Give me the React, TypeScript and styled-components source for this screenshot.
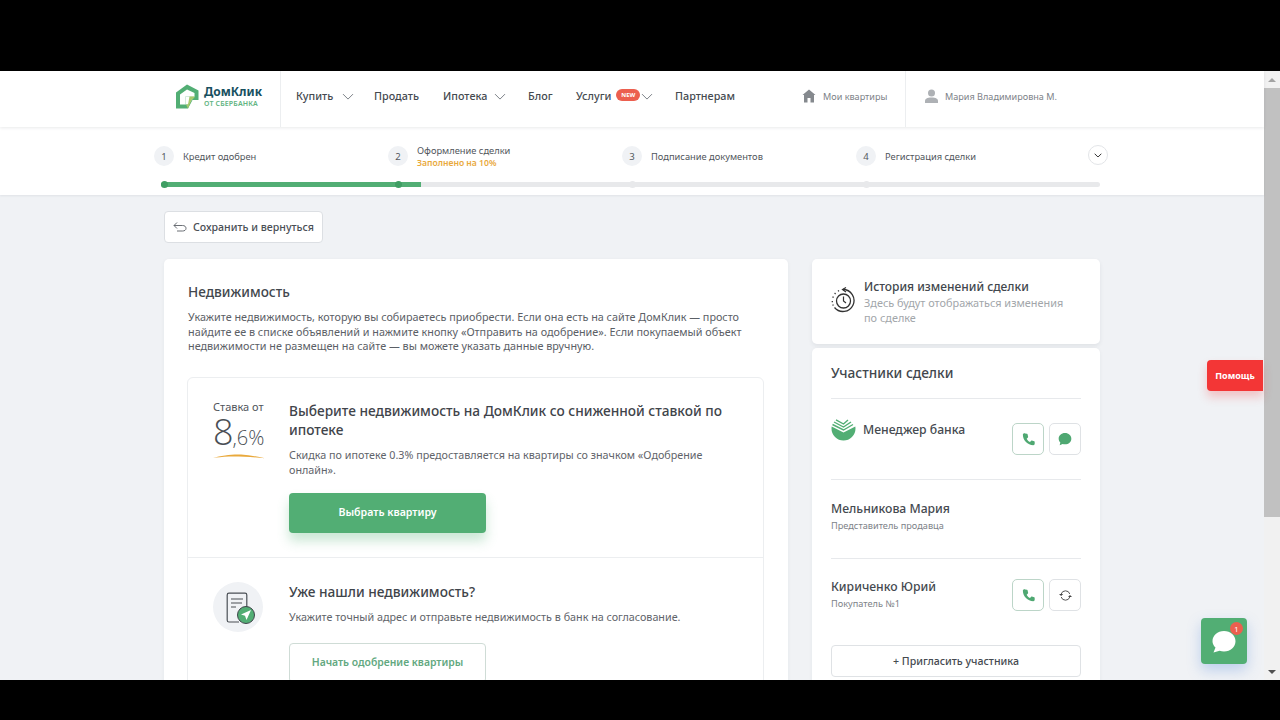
import React from "react";
import styled, { createGlobalStyle } from "styled-components";

const Global = createGlobalStyle`
  html, body { margin: 0; padding: 0; background: #000; height: 100%; overflow: hidden; }
  * { box-sizing: border-box; }
  body { font-family: "Noto Sans", "Open Sans", sans-serif; color: #3f444a; }
`;

const Screen = styled.div`
  width: 1280px; height: 720px; display: flex; flex-direction: column; background: #000;
`;
const BlackBar = styled.div<{ $h: number }>`
  height: ${p => p.$h}px; flex: none; background: #000;
`;
const Viewport = styled.div`
  position: relative; height: 609px; flex: none; display: flex; overflow: hidden;
`;
const Page = styled.div`
  width: 1264px; flex: none; background: #f0f2f5; display: flex; flex-direction: column;
`;
const Scrollbar = styled.div`
  width: 16px; flex: none; background: #f1f1f1; display: flex; flex-direction: column; align-items: center;
`;
const ScrollArrow = styled.div<{ $down?: boolean }>`
  height: 17px; flex: none; display: flex; align-items: center; justify-content: center;
  &::before {
    content: ""; width: 0; height: 0; border-left: 4px solid transparent; border-right: 4px solid transparent;
    ${p => p.$down ? "border-top: 4px solid #505050;" : "border-bottom: 4px solid #a3a3a3;"}
  }
`;
const ScrollThumb = styled.div`
  width: 16px; height: 429px; background: #c1c1c1;
`;
const ScrollTrack = styled.div`flex: 1;`;

const Header = styled.header`
  height: 56px; flex: none; background: #fff; display: flex; padding-left: 164px;
  box-shadow: 0 1px 3px rgba(40, 50, 60, .1); position: relative; z-index: 2;
`;
const LogoCell = styled.div`
  width: 117px; flex: none; padding: 0 0 6px 12px; display: flex; align-items: center; gap: 5px;
  border-right: 1px solid #eceef0;
`;
const LogoText = styled.div`
  display: flex; flex-direction: column; padding-top: 1px;
`;
const LogoName = styled.span`
  font-size: 12px; font-weight: 700; line-height: 14px; color: #17505f;
`;
const LogoSub = styled.span`
  font-size: 7px; font-weight: 600; line-height: 9px; color: #62b482; letter-spacing: .15px;
`;
const Nav = styled.nav`
  display: flex; align-items: center; padding: 0 0 8px 15px; width: 508px; flex: none;
`;
const NavItem = styled.span<{ $w: number }>`
  font-size: 10.8px; font-weight: 500; color: #454a50; width: ${p => p.$w}px; flex: none;
  display: flex; align-items: center; white-space: nowrap; gap: 3px;
`;
const ChevronGap = styled.span<{ $m: number }>`
  display: flex; margin: 3px 0 0 ${p => p.$m}px;
`;
const NewBadge = styled.span`
  font-size: 6px; font-weight: 700; color: #fff; background: #ec5f4f; border-radius: 6px;
  width: 24px; height: 12px; display: inline-flex; align-items: center; justify-content: center;
  margin: -1px -2px 0 2px;
`;
const Right = styled.div<{ $w: number; $line?: boolean }>`
  width: ${p => p.$w}px; flex: none; display: flex; align-items: center; gap: ${p => p.$line ? 7 : 7}px;
  padding-bottom: 6px;
  font-size: 9.1px; color: #7d8288; white-space: nowrap;
  ${p => p.$line ? "border-left: 1px solid #eceef0; padding-left: 19px;" : "padding-left: 13px;"}
`;

const Steps = styled.section`
  height: 68px; flex: none; background: #fff; padding: 0 164px 0 161px; position: relative;
  box-shadow: 0 1px 2px rgba(40, 50, 60, .08); z-index: 1;
  display: flex; flex-direction: column;
`;
const StepRow = styled.div`
  height: 55px; flex: none; display: flex; position: relative;
`;
const Step = styled.div`
  width: 234px; flex: none; display: flex; align-items: center; gap: 9px; padding-top: 3px;
  transform: translateX(-7px);
`;
const StepNum = styled.span`
  width: 20px; height: 20px; flex: none; border-radius: 50%; background: #f0f2f5;
  font-size: 9.6px; color: #55595f; display: flex; align-items: center; justify-content: center;
`;
const StepText = styled.div`
  display: flex; flex-direction: column; font-size: 9.3px; line-height: 12px; color: #50555b; white-space: nowrap;
  padding-top: 2px;
`;
const StepNote = styled.span`
  color: #e9a93c; font-weight: 600; font-size: 8.6px; line-height: 13px;
`;
const Collapse = styled.span`
  position: absolute; right: -8px; top: 18px; width: 20px; height: 20px; border-radius: 50%;
  border: 1px solid #e3e5e8; background: #fff; display: flex; align-items: center; justify-content: center;
`;
const Track = styled.div`
  height: 5px; flex: none; background: #e8e9eb; border-radius: 3px; position: relative; width: 939px;
`;
const TrackFill = styled.div<{ $w: number }>`
  position: absolute; left: 0; top: 0; height: 5px; width: ${p => p.$w}px; background: #52ae74; border-radius: 3px 0 0 3px;
`;
const TrackDot = styled.span<{ $x: number; $on?: boolean }>`
  position: absolute; left: ${p => p.$x}px; top: -1px; width: 7px; height: 7px; border-radius: 50%;
  background: ${p => p.$on ? "#3f9e63" : "#e8e9eb"};
`;

const Body = styled.main`
  padding: 16px 0 0 164px; flex: 1; min-height: 0; overflow: hidden;
`;
const BackButton = styled.button`
  height: 32px; width: 159px; background: #fff; border: 1px solid #dcdfe3; border-radius: 4px;
  display: flex; align-items: center; gap: 6px; padding: 0 0 1px 8px; font: 500 10.6px "Noto Sans", sans-serif; color: #4a4f55;
`;
const Columns = styled.div`
  display: flex; gap: 24px; margin-top: 16px; align-items: flex-start;
`;
const MainCard = styled.section`
  width: 624px; flex: none; background: #fff; border-radius: 5px; padding: 24px 24px 0 24px; height: 500px;
  box-shadow: 0 1px 4px rgba(40, 50, 60, .05);
`;
const Title = styled.h2`
  margin: 0; font-size: 13.6px; line-height: 18px; font-weight: 500; color: #42474d;
`;
const Lead = styled.p`
  margin: 9px 0 0; font-size: 10.8px; line-height: 14.5px; color: #5b6066; white-space: nowrap;
`;
const Options = styled.div`
  margin: 23px 0 0 -1px; border: 1px solid #eceef0; border-radius: 6px; width: 577px;
`;
const Option = styled.div<{ $line?: boolean }>`
  display: flex; ${p => p.$line ? "border-top: 1px solid #eceef0;" : ""}
  padding: ${p => p.$line ? "24px" : "23px"} 0 24px 0;
`;
const Lhs = styled.div`
  width: 101px; flex: none; display: flex; flex-direction: column; align-items: flex-start; padding-left: 25px;
`;
const Rate = styled.div`
  font-size: 11px; line-height: 14px; color: #50555b; white-space: nowrap; margin-top: -1px;
`;
const RateValue = styled.div`
  font-size: 36px; line-height: 36px; font-weight: 300; color: #4a4f55; white-space: nowrap; font-family: "Open Sans", sans-serif;
  letter-spacing: -1px;
`;
const RateFrac = styled.span`
  font-size: 20px; letter-spacing: 0;
`;
const RateLine = styled.svg`
  display: block; margin-top: -3px;
`;
const Rhs = styled.div`
  width: 460px; flex: none;
`;
const OptionTitle = styled.h3`
  margin: 0; font-size: 13.7px; line-height: 19px; font-weight: 500; color: #3f444a;
`;
const OptionText = styled.p`
  margin: 9px 0 0; font-size: 10.75px; line-height: 15px; color: #5f646a;
`;
const Primary = styled.button`
  display: block; margin-top: 15px; width: 197px; height: 40px; border: 0; border-radius: 4px; background: #52ae74;
  color: #fff; font: 600 10.6px "Noto Sans", sans-serif; padding: 0 0 2px;
  box-shadow: 0 8px 12px rgba(82, 174, 116, .3);
`;
const Outline = styled.button`
  display: block; margin-top: 18px; width: 197px; height: 40px; border: 1px solid #cfdcd6; border-radius: 4px; background: #fff;
  color: #62a880; font: 600 10.4px "Noto Sans", sans-serif; padding: 0 0 2px;
`;
const IconCircle = styled.div`
  width: 50px; height: 50px; border-radius: 50%; background: #f0f2f5; display: flex;
`;
const Side = styled.aside`
  width: 288px; flex: none; display: flex; flex-direction: column; gap: 4px;
`;
const HistoryCard = styled.section`
  height: 85px; background: #fff; border-radius: 5px; display: flex; gap: 8px; padding: 20px 16px 0 19px;
  box-shadow: 0 2px 4px rgba(40, 50, 60, .08);
`;
const HistoryIcon = styled.div`
  padding-top: 8px; flex: none; height: 24px;
`;
const HistoryTitle = styled.div`
  font-size: 12px; line-height: 16px; font-weight: 500; color: #42474d;
`;
const HistoryText = styled.div`
  font-size: 10.9px; line-height: 15px; color: #a2a6aa; margin-top: 0; width: 215px;
`;
const MembersCard = styled.section`
  background: #fff; border-radius: 5px; padding: 16px 19px 0; height: 400px;
  box-shadow: 0 1px 4px rgba(40, 50, 60, .05);
`;
const MembersTitle = styled.h2`
  margin: 0; font-size: 13.7px; line-height: 18px; font-weight: 500; color: #42474d; padding-bottom: 16px;
`;
const Member = styled.div<{ $h: number }>`
  height: ${p => p.$h}px; border-top: 1px solid #e7e9ec; display: flex; justify-content: space-between; align-items: flex-start;
`;
const MemberInfo = styled.div<{ $top: number }>`
  padding-top: ${p => p.$top}px;
`;
const BankRow = styled.div`
  display: flex; align-items: center; gap: 7px; padding-top: 18px;
`;
const MemberName = styled.div`
  font-size: 12.2px; line-height: 17px; font-weight: 500; color: #454a50;
`;
const MemberRole = styled.div`
  font-size: 9.2px; line-height: 13px; color: #7d8288; margin-top: 2px;
`;
const Actions = styled.div<{ $top: number }>`
  display: flex; gap: 5px; padding-top: ${p => p.$top}px;
`;
const IconBtn = styled.button<{ $active?: boolean }>`
  width: 32px; height: 32px; padding: 0; background: #fff; border-radius: 5px; display: flex; align-items: center; justify-content: center;
  border: 1px solid ${p => p.$active ? "#bcd5c8" : "#dfe2e5"};
`;
const Invite = styled.button`
  display: block; margin-top: 1px; width: 250px; height: 32px; background: #fff; border: 1px solid #dfe2e5; border-radius: 4px;
  font: 500 10.6px "Noto Sans", sans-serif; color: #454a50; padding: 0 0 1px;
`;
const Help = styled.div`
  position: absolute; left: 1207px; top: 289px; width: 56px; height: 31px; background: #f33636; border-radius: 4px 0 0 4px;
  color: #fff; font-size: 9px; font-weight: 700; display: flex; align-items: center; justify-content: center;
  box-shadow: 0 6px 10px rgba(243, 54, 54, .25);
`;
const Chat = styled.div`
  position: absolute; left: 1201px; top: 547px; width: 46px; height: 46px; background: #52ae74; border-radius: 4px;
  display: flex; align-items: center; justify-content: center;
  box-shadow: 0 6px 14px rgba(90, 140, 220, .35);
`;
const ChatBadge = styled.span`
  position: absolute; right: 4px; top: 4px; width: 13px; height: 13px; border-radius: 50%; background: #ec5f4f;
  color: #fff; font-size: 7.5px; display: flex; align-items: center; justify-content: center;
`;

const Chevron = ({ size = 12, color = "#7d8288", weight = 1 }: { size?: number; color?: string; weight?: number }) => (
  <svg width={size} height={size * 0.6} viewBox="0 0 12 7" fill="none"><path d="M1 1l5 5 5-5" stroke={color} strokeWidth={weight} /></svg>
);
const Phone = () => (
  <svg width="15" height="15" viewBox="0 0 24 24"><path fill="#4fa872" d="M6.6 2.2l3 .5c.5.1.8.4.9.9l.9 4c.1.4 0 .8-.3 1.1l-2 1.9c1.1 2.3 3 4.2 5.3 5.3l1.9-2c.3-.3.7-.4 1.1-.3l3.7 1c.5.1.8.5.8 1v3.200c0 1.3-1 2.200-2.200 2.200C10.600 21 3 13.300 3 4.300 3 3.100 4.400 1.900 6.600 2.200z" /></svg>
);
const Bubble = () => (
  <svg width="16" height="16" viewBox="0 0 24 24"><path fill="#4fa872" d="M12 3c5.500 0 9.500 3.700 9.500 8.500S17.500 20 12 20c-1.300 0-2.500-.2-3.600-.6L4 21.500l1-4.300C3.400 15.700 2.500 13.700 2.500 11.500 2.500 6.700 6.500 3 12 3z" /></svg>
);

export default function App() {
  return (
    <Screen>
      <Global />
      <BlackBar $h={71} />
      <Viewport>
        <Page>
          <Header>
            <LogoCell>
              <svg width="23" height="25" viewBox="0 0 23 25" fill="none">
                <path d="M0 8.500L11 0.500 22.500 6.500V16H16.500L12 24.500H0V8.500Z" fill="#52ae74" />
                <path d="M4 10.500L11 5.500 18.500 9V12.500H9.500V20.500H4V10.500Z" fill="#fff" />
                <path d="M9.500 12.500H18.500L12 20.500H9.500V12.500Z" fill="#fff" />
                <path d="M13.500 12.500H18.500V13.500L15.500 16 12 24.500 10 20.500H12L13.500 12.500Z" fill="#a7c96b" />
              </svg>
              <LogoText>
                <LogoName>ДомКлик</LogoName>
                <LogoSub>ОТ СБЕРБАНКА</LogoSub>
              </LogoText>
            </LogoCell>
            <Nav>
              <NavItem $w={78}>Купить <ChevronGap $m={6}><Chevron /></ChevronGap></NavItem>
              <NavItem $w={69}>Продать</NavItem>
              <NavItem $w={85}>Ипотека <ChevronGap $m={4}><Chevron /></ChevronGap></NavItem>
              <NavItem $w={48}>Блог</NavItem>
              <NavItem $w={99}>Услуги<NewBadge>NEW</NewBadge><ChevronGap $m={0}><Chevron /></ChevronGap></NavItem>
              <NavItem $w={110}>Партнерам</NavItem>
            </Nav>
            <Right $w={116}>
              <svg width="14" height="14" viewBox="0 0 14 14"><path fill="#85898e" d="M7 0.500L13.500 6H12V13.500H2V6H.5L7 .5zM5.500 9v4.500h3V9h-3z" /></svg>
              Мои квартиры
            </Right>
            <Right $w={170} $line>
              <svg width="13" height="14" viewBox="0 0 13 14"><circle cx="6.500" cy="4" r="3.500" fill="#aeb1b5" /><path fill="#aeb1b5" d="M0 14v-2c0-2 2-3.500 6.500-3.500S13 10 13 12v2H0z" /></svg>
              Мария Владимировна М.
            </Right>
          </Header>
          <Steps>
            <StepRow>
              <Step><StepNum>1</StepNum><StepText>Кредит одобрен</StepText></Step>
              <Step><StepNum>2</StepNum><StepText>Оформление сделки<StepNote>Заполнено на 10%</StepNote></StepText></Step>
              <Step><StepNum>3</StepNum><StepText>Подписание документов</StepText></Step>
              <Step><StepNum>4</StepNum><StepText>Регистрация сделки</StepText></Step>
              <Collapse><Chevron size={8} color="#333" weight={1.5} /></Collapse>
            </StepRow>
            <Track>
              <TrackFill $w={260} />
              <TrackDot $x={0} $on />
              <TrackDot $x={234} $on />
              <TrackDot $x={468} />
              <TrackDot $x={702} />
            </Track>
          </Steps>
          <Body>
            <BackButton>
              <svg width="14" height="10" viewBox="0 0 14 10" fill="none"><path d="M4 .5L1 3.500l3 3M1 3.500h8.500c2 0 3.500 1 3.500 2.800S11.500 9 9.500 9H4" stroke="#5a5f65" strokeWidth=".9" /></svg>
              Сохранить и вернуться
            </BackButton>
            <Columns>
              <MainCard>
                <Title>Недвижимость</Title>
                <Lead>
                  Укажите недвижимость, которую вы собираетесь приобрести. Если она есть на сайте ДомКлик — просто<br />
                  найдите ее в списке объявлений и нажмите кнопку «Отправить на одобрение». Если покупаемый объект<br />
                  недвижимости не размещен на сайте — вы можете указать данные вручную.
                </Lead>
                <Options>
                  <Option>
                    <Lhs>
                      <Rate>Ставка от</Rate>
                      <RateValue>8<RateFrac>,6%</RateFrac></RateValue>
                      <RateLine width="52" height="6" viewBox="0 0 52 6" fill="none"><path d="M0 5C8 2.500 20 1 28 1.500 36 2 44 3.500 52 5.200 40 4 26 3.200 16 3.500 9 3.800 4 4.500 0 5Z" fill="#e9a93c" /></RateLine>
                    </Lhs>
                    <Rhs>
                      <OptionTitle>Выберите недвижимость на ДомКлик со сниженной ставкой по ипотеке</OptionTitle>
                      <OptionText>Скидка по ипотеке 0.3% предоставляется на квартиры со значком «Одобрение онлайн».</OptionText>
                      <Primary>Выбрать квартиру</Primary>
                    </Rhs>
                  </Option>
                  <Option $line>
                    <Lhs>
                      <IconCircle>
                        <svg width="50" height="50" viewBox="0 0 50 50" fill="none">
                          <path d="M26 40H16a1.800 1.800 0 0 1-1.800-1.800V13a1.800 1.800 0 0 1 1.800-1.800h16a1.800 1.800 0 0 1 1.800 1.800V25" stroke="#4a4f55" strokeWidth="1.200" />
                          <path d="M18 17h12M18 21h11M18 25h5" stroke="#4a4f55" strokeWidth="1.200" />
                          <circle cx="33" cy="33" r="8.500" fill="#52ae74" stroke="#3f444a" strokeWidth="1" />
                          <path d="M38 28l-10 4.500 4 1.300L33.500 38 38 28Z" fill="#fff" />
                        </svg>
                      </IconCircle>
                    </Lhs>
                    <Rhs>
                      <OptionTitle>Уже нашли недвижимость?</OptionTitle>
                      <OptionText>Укажите точный адрес и отправьте недвижимость в банк на согласование.</OptionText>
                      <Outline>Начать одобрение квартиры</Outline>
                    </Rhs>
                  </Option>
                </Options>
              </MainCard>
              <Side>
                <HistoryCard>
                  <HistoryIcon>
                    <svg width="25" height="26" viewBox="0 0 25 26" fill="none">
                      <circle cx="12.500" cy="14" r="7" stroke="#333" strokeWidth="1.300" />
                      <path d="M12.500 9.500V14l2.500 2" stroke="#333" strokeWidth="1.200" />
                      <path d="M12 2.500a11 11 0 1 1-8.500 18" stroke="#333" strokeWidth="1.300" />
                      <path d="M15 .5L11.500 2.500 15 5" stroke="#333" strokeWidth="1.200" />
                      <path d="M8 3.500L7 4.200M4.500 6l-.8 1M2.300 9.500l-.5 1.200M1.300 14v1.200M1.800 17.500l.4 1.100" stroke="#333" strokeWidth="1.300" />
                    </svg>
                  </HistoryIcon>
                  <div>
                    <HistoryTitle>История изменений сделки</HistoryTitle>
                    <HistoryText>Здесь будут отображаться изменения по сделке</HistoryText>
                  </div>
                </HistoryCard>
                <MembersCard>
                  <MembersTitle>Участники сделки</MembersTitle>
                  <Member $h={81}>
                    <BankRow>
                      <svg width="25" height="25" viewBox="0 0 25 25" fill="none">
                        <path d="M.5 11.500a12 12 0 0 0 24 0c0-.7-.1-1.400-.2-2L12.500 15.500.7 9.500c-.1.600-.2 1.300-.2 2Z" fill="#52ae74" />
                        <path d="M1.500 7.500l11 5.500L22 7.500M3 5l9.500 5L20 5M5 2.800l7.500 4.200L17 3" stroke="#52ae74" strokeWidth="1.400" />
                      </svg>
                      <MemberName>Менеджер банка</MemberName>
                    </BankRow>
                    <Actions $top={24}>
                      <IconBtn $active><Phone /></IconBtn>
                      <IconBtn><Bubble /></IconBtn>
                    </Actions>
                  </Member>
                  <Member $h={79}>
                    <MemberInfo $top={20}>
                      <MemberName>Мельникова Мария</MemberName>
                      <MemberRole>Представитель продавца</MemberRole>
                    </MemberInfo>
                  </Member>
                  <Member $h={86}>
                    <MemberInfo $top={19}>
                      <MemberName>Кириченко Юрий</MemberName>
                      <MemberRole>Покупатель №1</MemberRole>
                    </MemberInfo>
                    <Actions $top={20}>
                      <IconBtn $active><Phone /></IconBtn>
                      <IconBtn>
                        <svg width="13" height="13" viewBox="0 0 13 13" fill="none">
                          <path d="M2.200 5a4.500 4.500 0 0 1 8.600 0M10.800 8a4.500 4.500 0 0 1-8.600 0" stroke="#444" strokeWidth=".9" />
                          <path d="M0 5h4.200L2.100 7zM9 8h4l-2-2z" fill="#444" />
                        </svg>
                      </IconBtn>
                    </Actions>
                  </Member>
                  <Invite>+ Пригласить участника</Invite>
                </MembersCard>
              </Side>
            </Columns>
          </Body>
        </Page>
        <Scrollbar>
          <ScrollArrow />
          <ScrollThumb />
          <ScrollTrack />
          <ScrollArrow $down />
        </Scrollbar>
        <Help>Помощь</Help>
        <Chat>
          <svg width="26" height="25" viewBox="0 0 26 25"><path fill="#fff" d="M13 2c6.500 0 11.500 4.500 11.500 10.200S19.500 22.500 13 22.500c-1.600 0-3-.3-4.400-.8L2.500 23.500l2-5C2.600 16.700 1.500 14.600 1.500 12.200 1.500 6.500 6.500 2 13 2Z" /></svg>
          <ChatBadge>1</ChatBadge>
        </Chat>
      </Viewport>
      <BlackBar $h={40} />
    </Screen>
  );
}
